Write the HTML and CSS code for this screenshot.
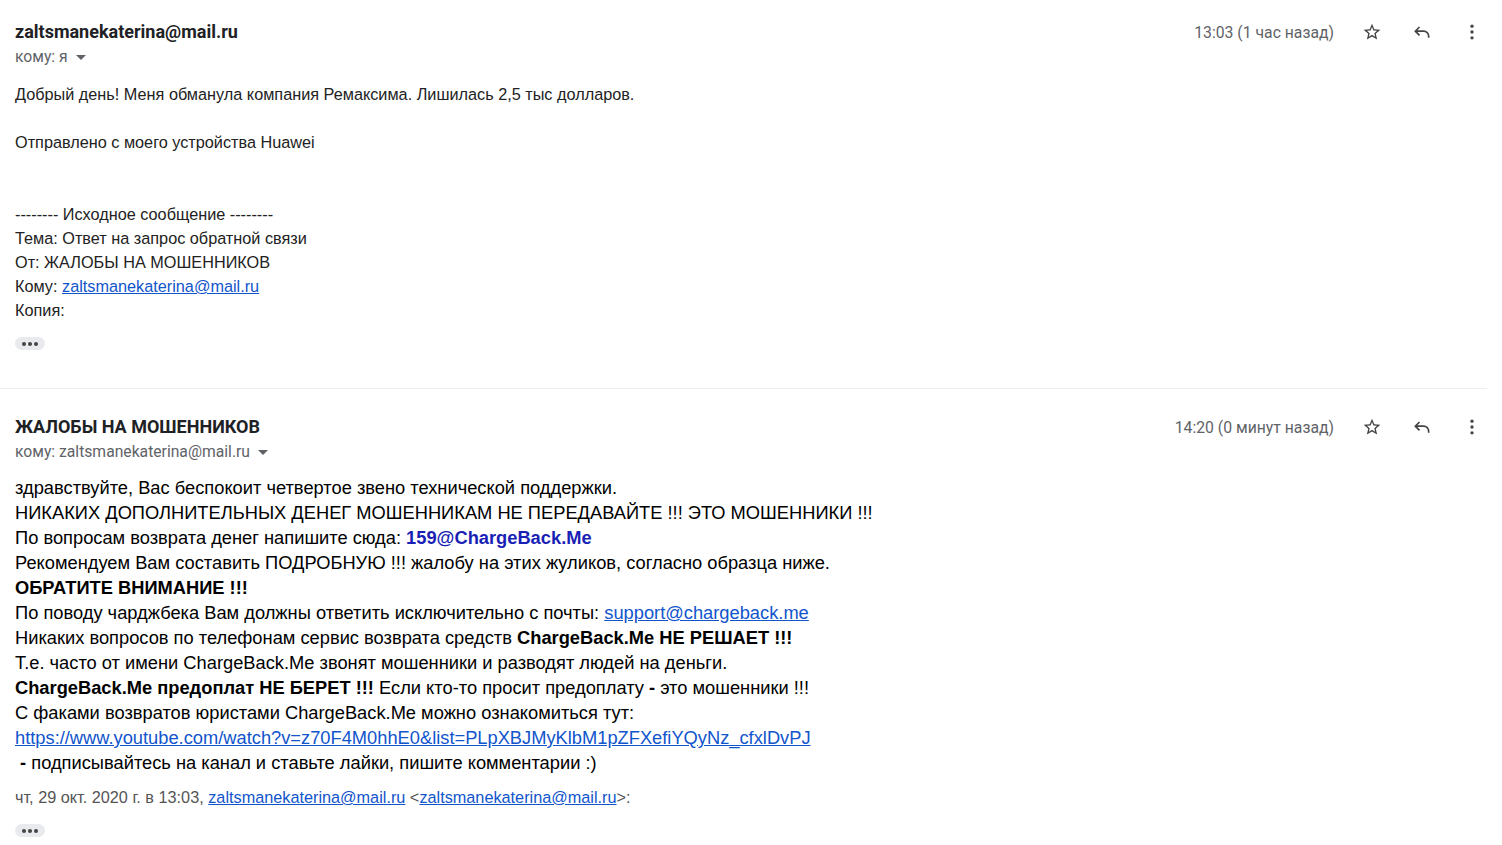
FILE: index.html
```html
<!DOCTYPE html>
<html lang="ru">
<head>
  <meta charset="UTF-8">
  <title>Письмо</title>
  <link rel="stylesheet" href="styles.css">
</head>
<body>
  <div class="thread">
    <div class="msg first">
      <div class="head">
        <div class="who">
          <p class="from">zaltsmanekaterina@mail.ru</p>
          <p class="to">кому: я <i class="caret"></i></p>
        </div>
        <div class="side">
          <span class="time">13:03 (1 час назад)</span>
          <span class="btn"><svg viewBox="0 0 24 24"><path d="M22 9.24l-7.19-.62L12 2 9.19 8.63 2 9.24l5.460 4.73L5.82 21 12 17.27 18.18 21l-1.63-7.03L22 9.24zM12 15.4l-3.76 2.27 1-4.28-3.32-2.88 4.38-.38L12 6.1l1.71 4.04 4.38.38-3.32 2.88 1 4.28L12 15.4z"/></svg></span>
          <span class="btn"><svg viewBox="0 0 24 24"><path class="line" d="M9 6L4 11l5 5M4 11h10a6 6 0 0 1 6 6v2"/></svg></span>
          <span class="btn"><svg viewBox="0 0 24 24"><circle cx="12" cy="5" r="2"/><circle cx="12" cy="12" r="2"/><circle cx="12" cy="19" r="2"/></svg></span>
        </div>
      </div>
      <div class="body small">
        Добрый день! Меня обманула компания Ремаксима. Лишилась 2,5 тыс долларов.<br>
        <br>
        Отправлено с моего устройства Huawei<br>
        <br>
        <br>
        -------- Исходное сообщение --------<br>
        Тема: Ответ на запрос обратной связи<br>
        От: ЖАЛОБЫ НА МОШЕННИКОВ<br>
        Кому: <a href="#">zaltsmanekaterina@mail.ru</a><br>
        Копия:
      </div>
      <span class="more"><b></b><b></b><b></b></span>
    </div>

    <div class="msg second">
      <div class="head">
        <div class="who">
          <p class="from">ЖАЛОБЫ НА МОШЕННИКОВ</p>
          <p class="to">кому: zaltsmanekaterina@mail.ru <i class="caret"></i></p>
        </div>
        <div class="side">
          <span class="time">14:20 (0 минут назад)</span>
          <span class="btn"><svg viewBox="0 0 24 24"><path d="M22 9.24l-7.19-.62L12 2 9.19 8.63 2 9.24l5.46 4.73L5.82 21 12 17.27 18.18 21l-1.63-7.03L22 9.24zM12 15.4l-3.76 2.27 1-4.28-3.32-2.88 4.38-.38L12 6.1l1.71 4.04 4.38.38-3.32 2.88 1 4.28L12 15.4z"/></svg></span>
          <span class="btn"><svg viewBox="0 0 24 24"><path class="line" d="M9 6L4 11l5 5M4 11h10a6 6 0 0 1 6 6v2"/></svg></span>
          <span class="btn"><svg viewBox="0 0 24 24"><circle cx="12" cy="5" r="2"/><circle cx="12" cy="12" r="2"/><circle cx="12" cy="19" r="2"/></svg></span>
        </div>
      </div>
      <div class="body big">
        здравствуйте, Вас беспокоит четвертое звено технической поддержки.<br>
        НИКАКИХ ДОПОЛНИТЕЛЬНЫХ ДЕНЕГ МОШЕННИКАМ НЕ ПЕРЕДАВАЙТЕ !!! ЭТО МОШЕННИКИ !!!<br>
        По вопросам возврата денег напишите сюда: <b class="mail">159@ChargeBack.Me</b><br>
        Рекомендуем Вам составить ПОДРОБНУЮ !!! жалобу на этих жуликов, согласно образца ниже.<br>
        <b>ОБРАТИТЕ ВНИМАНИЕ !!!</b><br>
        По поводу чарджбека Вам должны ответить исключительно с почты: <a href="#">support@chargeback.me</a><br>
        Никаких вопросов по телефонам сервис возврата средств <b>ChargeBack.Me НЕ РЕШАЕТ !!!</b><br>
        Т.е. часто от имени ChargeBack.Me звонят мошенники и разводят людей на деньги.<br>
        <b>ChargeBack.Me предоплат НЕ БЕРЕТ !!!</b> Если кто-то просит предоплату <b>-</b> это мошенники !!!<br>
        С факами возвратов юристами ChargeBack.Me можно ознакомиться тут:<br>
        <a href="#">https://www.youtube.com/watch?v=z70F4M0hhE0&amp;list=PLpXBJMyKlbM1pZFXefiYQyNz_cfxlDvPJ</a><br>
        &nbsp;<b>-</b> подписывайтесь на канал и ставьте лайки, пишите комментарии :)
      </div>
      <p class="attr">чт, 29 окт. 2020 г. в 13:03, <a href="#">zaltsmanekaterina@mail.ru</a> &lt;<a href="#">zaltsmanekaterina@mail.ru</a>&gt;:</p>
      <span class="more"><b></b><b></b><b></b></span>
    </div>
  </div>
</body>
</html>
```

FILE: styles.css
```css
*{
  margin: 0;
  padding: 0;
  box-sizing: border-box;
}
body{
  background: #fff;
  font-family: Roboto, "Noto Sans", sans-serif;
  color: #222;
}
.thread{
  width: 1487px;
}
.msg{
  padding-left: 15px;
}
.msg.first{
  padding-top: 22px;
  padding-bottom: 38px;
  border-bottom: 1px solid #efefef;
}
.msg.second{
  padding-top: 28px;
}
.head{
  display: flex;
  justify-content: space-between;
  align-items: flex-start;
}
.who p.from{
  font-size: 18px;
  line-height: 20px;
  font-weight: bold;
  color: #202124;
}
.who p.to{
  margin-top: 5px;
  font-size: 15.7px;
  line-height: 20px;
  color: #5f6368;
  display: flex;
  align-items: center;
  gap: 6px;
}
.caret{
  display: inline-block;
  width: 0;
  height: 0;
  border-left: 5px solid transparent;
  border-right: 5px solid transparent;
  border-top: 5px solid #5f6368;
  margin-left: 2px;
}
.side{
  display: flex;
  align-items: center;
  height: 20px;
  margin-right: -5px;
}
.time{
  font-size: 15.75px;
  color: #5f6368;
  margin-right: 8px;
}
.btn{
  width: 40px;
  height: 20px;
  margin-left: 10px;
  display: flex;
  justify-content: center;
  align-items: center;
}
.btn svg{
  width: 20px;
  height: 20px;
  fill: #444;
}
.btn svg path.line{
  fill: none;
  stroke: #444;
  stroke-width: 2;
}
.body{
  font-family: "Liberation Sans", Arial, sans-serif;
}
.body.small{
  margin-top: 15px;
  font-size: 16.25px;
  line-height: 24px;
  color: #222;
}
.body.big{
  margin-top: 13px;
  font-size: 18.3px;
  line-height: 25px;
  color: #000;
}
.body a, .attr a{
  color: #15c;
}
.body b.mail{
  color: #1a1fb5;
}
.attr{
  margin-top: 10px;
  font-family: "Liberation Sans", Arial, sans-serif;
  font-size: 16.25px;
  line-height: 24px;
  color: #555;
}
.more{
  display: inline-flex;
  gap: 2px;
  justify-content: center;
  align-items: center;
  width: 30px;
  height: 13px;
  margin-top: 15px;
  border-radius: 7px;
  background: #e8eaed;
}
.more b{
  width: 4px;
  height: 4px;
  border-radius: 50%;
  background: #444;
}
```
